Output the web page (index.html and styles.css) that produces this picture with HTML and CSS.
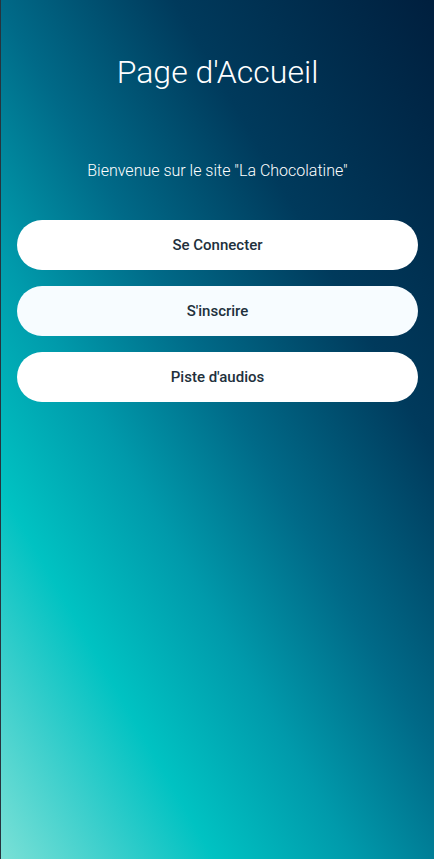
FILE: index.html
```html
<!DOCTYPE html>
<html lang="fr">
<head>
<meta charset="utf-8">
<title>Page d'Accueil</title>
<link rel="stylesheet" href="styles.css">
</head>
<body>
<main class="page">
  <h1 class="title">Page d'Accueil</h1>
  <p class="welcome">Bienvenue sur le site "La Chocolatine"</p>
  <nav class="actions">
    <button class="btn">Se Connecter</button>
    <button class="btn btn-active">S'inscrire</button>
    <button class="btn">Piste d'audios</button>
  </nav>
</main>
</body>
</html>
```
FILE: styles.css
```css
html, body {
  margin: 0;
  padding: 0;
  height: 100%;
}
body {
  font-family: Roboto, "Liberation Sans", sans-serif;
}
.page {
  box-sizing: border-box;
  min-height: 100vh;
  padding: 53px 16px 0 16px;
  border-left: 1px solid #26343e;
  background: linear-gradient(60deg, #7ae0d6 0%, #3ccfcc 12%, #00c2c2 23%, #009aab 38%, #006a88 53%, #003a5c 72%, #001f3e 100%);
  display: flex;
  flex-direction: column;
  align-items: stretch;
}
.title {
  margin: 0;
  font-size: 32px;
  line-height: 38px;
  font-weight: 300;
  color: #ffffff;
  text-align: center;
}
.welcome {
  margin: 70px 0 0;
  font-size: 16px;
  line-height: 19px;
  font-weight: 300;
  color: #ffffff;
  text-align: center;
}
.actions {
  margin-top: 40px;
  display: flex;
  flex-direction: column;
  gap: 16px;
}
.btn {
  height: 50px;
  border: none;
  border-radius: 25px;
  background: #ffffff;
  color: #22303c;
  font-family: Roboto, "Liberation Sans", sans-serif;
  font-size: 15px;
  font-weight: 500;
  cursor: pointer;
}
.btn-active {
  background: #f7fcff;
}
```
